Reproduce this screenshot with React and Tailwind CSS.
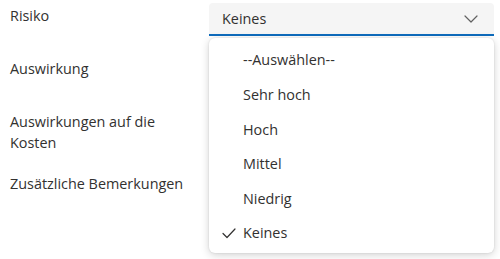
import { useState } from "react";

const options = ["--Auswählen--", "Sehr hoch", "Hoch", "Mittel", "Niedrig", "Keines"];

export default function App() {
  const [value] = useState("Keines");

  return (
    <div className="w-[500px] h-[259px] bg-white text-[#323130] text-[14.4px] font-['Segoe_UI','Open_Sans',sans-serif] overflow-hidden">
      <div className="relative pl-[10px] pt-[3px] flex flex-col">
        {/* Risiko */}
        <div className="flex">
          <div className="w-[199px] pt-[3px] leading-[20px]">Risiko</div>
          <div className="relative w-[285px]">
            <div className="h-[33px] flex items-center justify-between pl-[13px] pr-[16px] bg-[#f5f5f5] rounded-t-[4px] border-b-2 border-[#0f6cbd]">
              <span>{value}</span>
              <svg width="14" height="8" viewBox="0 0 14 8" fill="none">
                <path d="M1 1l6 6 6-6" stroke="#616161" strokeWidth="1.2" strokeLinecap="round" strokeLinejoin="round" />
              </svg>
            </div>
            <div className="absolute left-0 top-[35px] w-[285px] h-[215px] z-10 bg-white rounded-[6px] shadow-[0_2px_8px_rgba(0,0,0,0.18),0_0_2px_rgba(0,0,0,0.12)] pt-[5px] flex flex-col">
              {options.map((o) => (
                <div key={o} className="h-[34.6px] shrink-0 flex items-center">
                  <div className="w-[34px] flex justify-end pr-[7px]">
                    {o === value && (
                      <svg width="14" height="11" viewBox="0 0 14 11" fill="none">
                        <path d="M1 5.5l4 4L13 1" stroke="#323130" strokeWidth="1.2" strokeLinecap="round" strokeLinejoin="round" />
                      </svg>
                    )}
                  </div>
                  <span>{o}</span>
                </div>
              ))}
            </div>
          </div>
        </div>
        <div className="mt-[23px] leading-[20px]">Auswirkung</div>
        <div className="mt-[32px] leading-[21px]">
          Auswirkungen auf die
          <br />
          Kosten
        </div>
        <div className="mt-[21px] leading-[20px]">Zusätzliche Bemerkungen</div>
      </div>
    </div>
  );
}
